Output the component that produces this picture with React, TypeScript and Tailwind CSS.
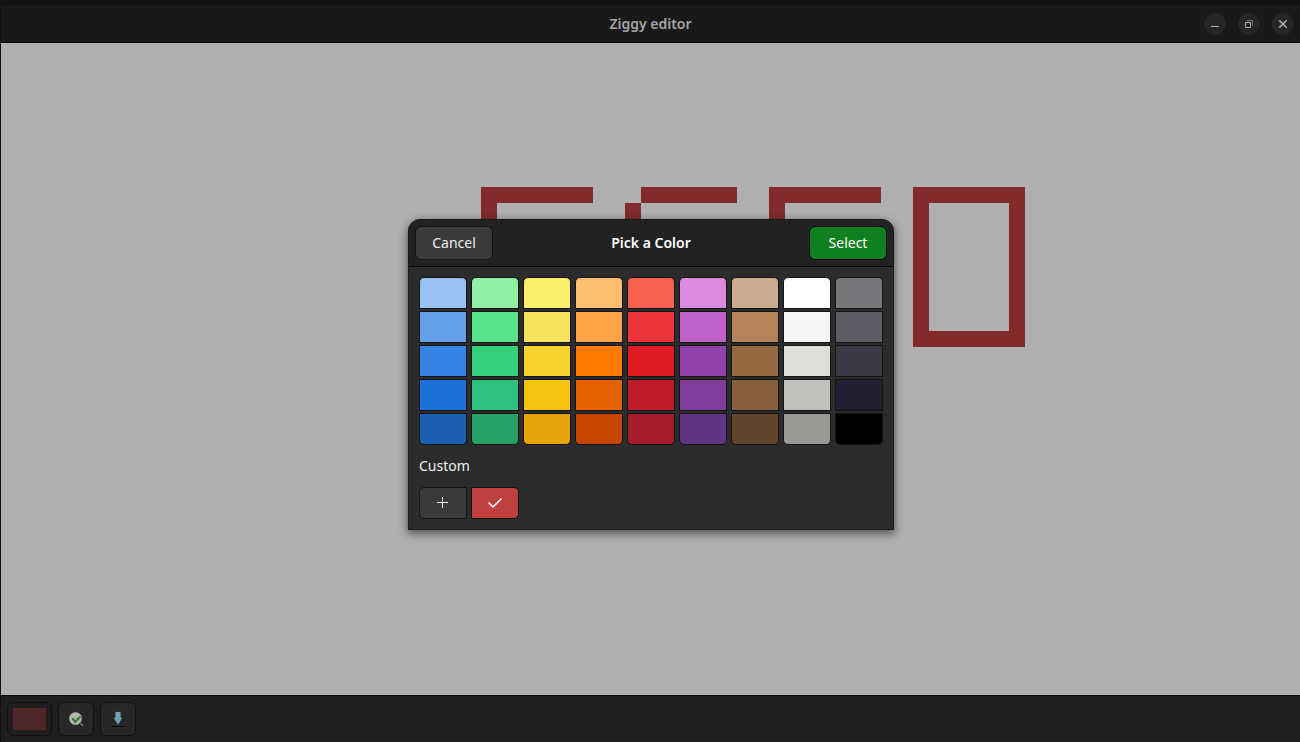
import React from "react";

const palette: string[][] = [
  ["#99c1f1", "#8ff0a4", "#f9f06b", "#ffbe6f", "#f66151", "#dc8add", "#cdab8f", "#ffffff", "#77767b"],
  ["#62a0ea", "#57e389", "#f8e45c", "#ffa348", "#ed333b", "#c061cb", "#b5835a", "#f6f5f4", "#5e5c64"],
  ["#3584e4", "#33d17a", "#f6d32d", "#ff7800", "#e01b24", "#9141ac", "#986a44", "#deddda", "#3d3846"],
  ["#1c71d8", "#2ec27e", "#f5c211", "#e66100", "#c01c28", "#813d9c", "#865e3c", "#c0bfbc", "#241f31"],
  ["#1a5fb4", "#26a269", "#e5a50a", "#c64600", "#a51d2d", "#613583", "#63452c", "#9a9996", "#000000"],
];

function Drawing() {
  return (
    <svg width="1040" height="320" className="block max-w-none" shapeRendering="crispEdges" fill="#832b2b" aria-hidden="true">
      <path d="M480 144h112v16h-96v48h80v16h-80v64h96v16h-112z" />
      <path d="M640 144h96v16h-96z M624 160h16v48h-16z" />
      <path d="M768 144h112v16h-96v48h80v16h-80v64h96v16h-112z" />
      <path fillRule="evenodd" d="M912 144h112v160h-112z M928 160v128h80v-128z" />
    </svg>
  );
}

function WindowButton({ label, children }: { label: string; children: React.ReactNode }) {
  return (
    <button aria-label={label} className="flex size-[22px] items-center justify-center rounded-full bg-[#262626]">
      <svg width="16" height="16" viewBox="0 0 16 16" fill="none" stroke="#b0b0b0" aria-hidden="true">
        {children}
      </svg>
    </button>
  );
}

const tool = "flex h-[34px] items-center justify-center rounded-md border border-[#0f0f0f]";

function ColorDialog() {
  return (
    <div
      role="dialog"
      aria-labelledby="dialog-title"
      className="w-[486px] overflow-hidden rounded-t-xl border border-[#1a1a1a] bg-[#2c2c2c] text-[#f0f0f0] shadow-[0_3px_9px_1px_rgba(0,0,0,0.5)]"
    >
      <header className="flex items-center justify-between border-b border-[#050505] bg-[#222222] p-1.5">
        <button className="h-[34px] w-[78px] rounded-md border border-[#151515] bg-[#3a3a3a]">Cancel</button>
        <h2 id="dialog-title" className="font-semibold text-white">Pick a Color</h2>
        <button className="h-[34px] w-[78px] rounded-md border border-[#0a0a0a] bg-[#0f7f20] text-white">Select</button>
      </header>
      <div className="p-2.5">
        <div className="grid grid-cols-9 gap-x-1 gap-y-0.5">
          {palette.map((row, r) =>
            row.map((color) => (
              <button
                key={color}
                aria-label={color}
                style={{ backgroundColor: color }}
                className={`h-8 border border-[#141414] ${r === 0 ? "rounded-t-[5px]" : ""} ${r === 4 ? "rounded-b-[5px]" : ""}`}
              />
            )),
          )}
        </div>
        <p className="py-2.5 leading-[22px]">Custom</p>
        <div className="grid grid-cols-9 gap-x-1">
          <button aria-label="Add custom color" className="flex h-8 items-center justify-center rounded-l-[5px] border border-[#141414] bg-[#3a3a3a]">
            <svg width="16" height="16" viewBox="0 0 16 16" shapeRendering="crispEdges" fill="#f0f0f0" aria-hidden="true">
              <path d="M7 2h1v5h5v1h-5v5h-1v-5h-5v-1h5z" />
            </svg>
          </button>
          <button aria-label="Selected custom color" className="flex h-8 items-center justify-center rounded-r-[5px] border border-[#141414] bg-[#c04040]">
            <svg width="16" height="16" viewBox="0 0 16 16" fill="none" stroke="#fff" strokeWidth="1.5" aria-hidden="true">
              <path d="M1.5 7.5L6 12L14.5 3.5" />
            </svg>
          </button>
        </div>
      </div>
    </div>
  );
}

export default function App() {
  return (
    <div className="relative flex h-screen flex-col bg-[#121212] pt-1.5 pl-px font-['Noto_Sans',sans-serif] text-sm">
      <header className="grid h-9 shrink-0 grid-cols-[1fr_auto_1fr] items-center bg-[#191919] px-1.5">
        <h1 className="col-start-2 font-semibold text-[#a6a6a6]">Ziggy editor</h1>
        <div className="flex justify-end gap-3">
          <WindowButton label="Minimize">
            <path d="M4 10.5h8" />
          </WindowButton>
          <WindowButton label="Restore">
            <path d="M4.5 6.5h5v5h-5z" />
            <path d="M6 4.5h5.5v5.5" stroke="#777" />
          </WindowButton>
          <WindowButton label="Close">
            <path d="M4.3 4.3l7.4 7.4M11.7 4.3l-7.4 7.400" strokeWidth="1.6" />
          </WindowButton>
        </div>
      </header>
      <main className="min-h-0 flex-1 overflow-hidden border-t border-black bg-[#b0b0b0]">
        <Drawing />
      </main>
      <footer className="flex shrink-0 gap-1.5 border-t border-[#080808] bg-[#1e1e1e] p-1.5">
        <button aria-label="Brush color" className={`${tool} w-[45px] bg-[#1e1e1e]`}>
          <span className="h-[22px] w-[33px] bg-[#4f2626]" />
        </button>
        <button aria-label="Check zoom" className={`${tool} w-9 bg-[#272727]`}>
          <svg width="16" height="16" viewBox="0 0 16 16" fill="none" aria-hidden="true">
            <path d="M11.5 11.5L15.5 15.5" stroke="#101010" strokeWidth="3" />
            <path d="M12 12L15.2 15.2" stroke="#a0a0a0" strokeWidth="1.2" />
            <circle cx="7.5" cy="7.5" r="7" fill="#34342f" />
            <circle cx="7.5" cy="7.500" r="6.300" fill="#b4b4b2" />
            <path d="M4.300 7.500L7.300 10.700L12.500 5.500" stroke="#28801c" strokeWidth="2" />
          </svg>
        </button>
        <button aria-label="Save" className={`${tool} w-9 bg-[#272727]`}>
          <svg width="16" height="16" viewBox="0 0 16 16" fill="none" aria-hidden="true">
            <path d="M2 15.5h12" stroke="#080808" />
            <path d="M5 .5h6v6h2L8 14.500L3 6.500h2z" fill="#78a0b4" stroke="#22333c" strokeWidth="1" />
          </svg>
        </button>
      </footer>
      <div className="absolute inset-x-0 top-1.5 bottom-0 flex items-center justify-center pt-px pl-0.5">
        <ColorDialog />
      </div>
    </div>
  );
}
